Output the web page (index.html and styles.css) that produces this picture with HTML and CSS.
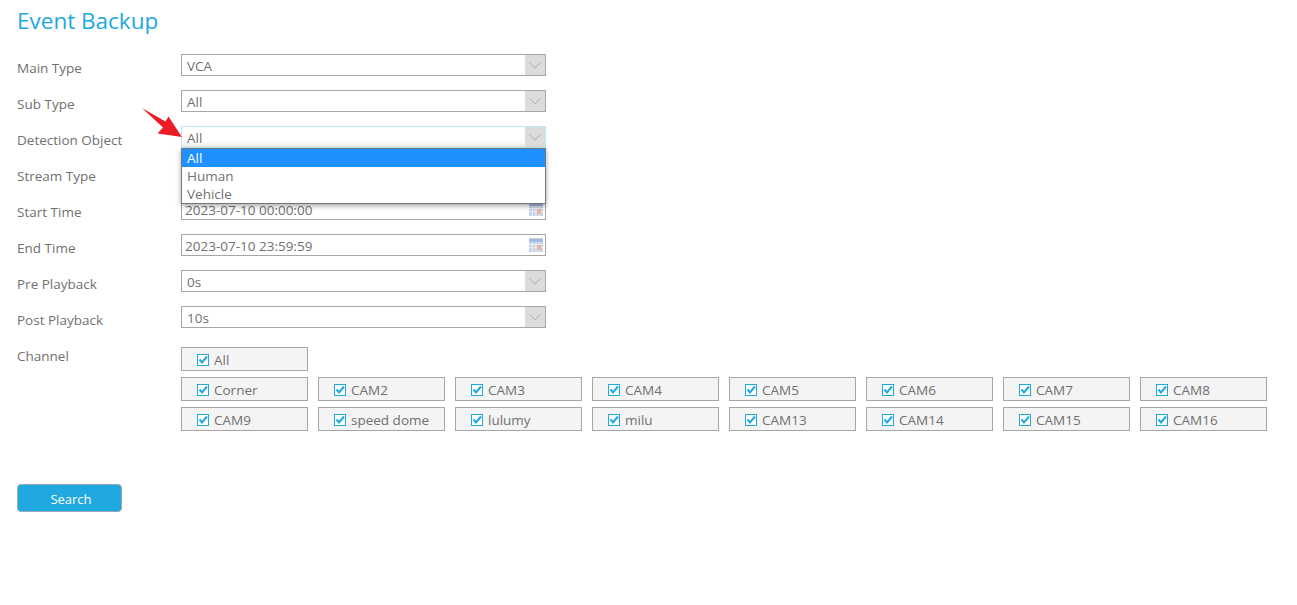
FILE: index.html
```html
<!DOCTYPE html>
<html lang="en">
<head>
<meta charset="utf-8">
<title>Event Backup</title>
<link rel="stylesheet" href="styles.css">
</head>
<body>
<main class="page">
  <h1 class="title">Event Backup</h1>
  <form class="form">
    <div class="row"><span class="label">Main Type</span><div class="select"><span class="value">VCA</span><span class="caret"><svg width="12" height="7" viewBox="0 0 12 7"><path d="M.5 .5L6 6L11.500 .5" fill="none" stroke="#b0b0b0"/></svg></span></div></div>
    <div class="row"><span class="label">Sub Type</span><div class="select"><span class="value">All</span><span class="caret"><svg width="12" height="7" viewBox="0 0 12 7"><path d="M.5 .5L6 6L11.500 .5" fill="none" stroke="#b0b0b0"/></svg></span></div></div>
    <div class="row"><span class="label">Detection Object</span>
      <div class="select select-open"><span class="value">All</span><span class="caret"><svg width="12" height="7" viewBox="0 0 12 7"><path d="M.5 .5L6 6L11.500 .5" fill="none" stroke="#b0b0b0"/></svg></span>
        <ul class="menu">
          <li class="option option-active">All</li>
          <li class="option">Human</li>
          <li class="option">Vehicle</li>
        </ul>
        <svg class="pointer" width="41" height="30" viewBox="0 0 41 30"><path d="M0 0L23.500 13.500L26.500 8.500L40 29L15.500 25.500L21 19.500Z" fill="#ee1c25"/></svg>
      </div>
    </div>
    <div class="row"><span class="label">Stream Type</span><div class="select"></div></div>
    <div class="row"><span class="label">Start Time</span><div class="select date"><span class="value">2023-07-10 00:00:00</span>
      <svg class="cal" width="14" height="14" viewBox="0 0 14 14"><rect width="14" height="14" fill="#c9d3e8"/><rect width="14" height="1" fill="#cfcfcf"/><rect y="1" width="14" height="3" fill="#a3bce6"/><path d="M0 6.500h14M0 9.500h14M3.500 4v10M7 4v10M10.500 4v10" stroke="#e6eaf4"/><rect x="8" y="7" width="4" height="5" fill="#eeb49c"/></svg></div></div>
    <div class="row"><span class="label">End Time</span><div class="select date"><span class="value">2023-07-10 23:59:59</span>
      <svg class="cal" width="14" height="14" viewBox="0 0 14 14"><rect width="14" height="14" fill="#c9d3e8"/><rect width="14" height="1" fill="#cfcfcf"/><rect y="1" width="14" height="3" fill="#a3bce6"/><path d="M0 6.500h14M0 9.500h14M3.500 4v10M7 4v10M10.500 4v10" stroke="#e6eaf4"/><rect x="8" y="7" width="4" height="5" fill="#eeb49c"/></svg></div></div>
    <div class="row"><span class="label">Pre Playback</span><div class="select"><span class="value">0s</span><span class="caret"><svg width="12" height="7" viewBox="0 0 12 7"><path d="M.5 .5L6 6L11.500 .5" fill="none" stroke="#b0b0b0"/></svg></span></div></div>
    <div class="row"><span class="label">Post Playback</span><div class="select"><span class="value">10s</span><span class="caret"><svg width="12" height="7" viewBox="0 0 12 7"><path d="M.5 .5L6 6L11.500 .5" fill="none" stroke="#b0b0b0"/></svg></span></div></div>
    <div class="row row-channel"><span class="label">Channel</span>
      <div class="channels">
        <label class="chan chan-all"><span class="check"><svg width="10" height="10" viewBox="0 0 10 10"><path d="M1.500 4.500L4 7.500L9 1.500" fill="none" stroke="#1fa7e0" stroke-width="2"/></svg></span>All</label>
        <label class="chan"><span class="check"><svg width="10" height="10" viewBox="0 0 10 10"><path d="M1.500 4.500L4 7.500L9 1.500" fill="none" stroke="#1fa7e0" stroke-width="2"/></svg></span>Corner</label>
        <label class="chan"><span class="check"><svg width="10" height="10" viewBox="0 0 10 10"><path d="M1.500 4.500L4 7.500L9 1.500" fill="none" stroke="#1fa7e0" stroke-width="2"/></svg></span>CAM2</label>
        <label class="chan"><span class="check"><svg width="10" height="10" viewBox="0 0 10 10"><path d="M1.500 4.500L4 7.500L9 1.500" fill="none" stroke="#1fa7e0" stroke-width="2"/></svg></span>CAM3</label>
        <label class="chan"><span class="check"><svg width="10" height="10" viewBox="0 0 10 10"><path d="M1.500 4.500L4 7.500L9 1.500" fill="none" stroke="#1fa7e0" stroke-width="2"/></svg></span>CAM4</label>
        <label class="chan"><span class="check"><svg width="10" height="10" viewBox="0 0 10 10"><path d="M1.500 4.500L4 7.500L9 1.500" fill="none" stroke="#1fa7e0" stroke-width="2"/></svg></span>CAM5</label>
        <label class="chan"><span class="check"><svg width="10" height="10" viewBox="0 0 10 10"><path d="M1.500 4.500L4 7.500L9 1.500" fill="none" stroke="#1fa7e0" stroke-width="2"/></svg></span>CAM6</label>
        <label class="chan"><span class="check"><svg width="10" height="10" viewBox="0 0 10 10"><path d="M1.500 4.500L4 7.500L9 1.500" fill="none" stroke="#1fa7e0" stroke-width="2"/></svg></span>CAM7</label>
        <label class="chan"><span class="check"><svg width="10" height="10" viewBox="0 0 10 10"><path d="M1.500 4.500L4 7.500L9 1.500" fill="none" stroke="#1fa7e0" stroke-width="2"/></svg></span>CAM8</label>
        <label class="chan"><span class="check"><svg width="10" height="10" viewBox="0 0 10 10"><path d="M1.500 4.500L4 7.500L9 1.500" fill="none" stroke="#1fa7e0" stroke-width="2"/></svg></span>CAM9</label>
        <label class="chan"><span class="check"><svg width="10" height="10" viewBox="0 0 10 10"><path d="M1.500 4.500L4 7.500L9 1.500" fill="none" stroke="#1fa7e0" stroke-width="2"/></svg></span>speed dome</label>
        <label class="chan"><span class="check"><svg width="10" height="10" viewBox="0 0 10 10"><path d="M1.500 4.500L4 7.500L9 1.500" fill="none" stroke="#1fa7e0" stroke-width="2"/></svg></span>lulumy</label>
        <label class="chan"><span class="check"><svg width="10" height="10" viewBox="0 0 10 10"><path d="M1.500 4.500L4 7.500L9 1.500" fill="none" stroke="#1fa7e0" stroke-width="2"/></svg></span>milu</label>
        <label class="chan"><span class="check"><svg width="10" height="10" viewBox="0 0 10 10"><path d="M1.500 4.500L4 7.500L9 1.500" fill="none" stroke="#1fa7e0" stroke-width="2"/></svg></span>CAM13</label>
        <label class="chan"><span class="check"><svg width="10" height="10" viewBox="0 0 10 10"><path d="M1.500 4.500L4 7.500L9 1.500" fill="none" stroke="#1fa7e0" stroke-width="2"/></svg></span>CAM14</label>
        <label class="chan"><span class="check"><svg width="10" height="10" viewBox="0 0 10 10"><path d="M1.500 4.500L4 7.500L9 1.500" fill="none" stroke="#1fa7e0" stroke-width="2"/></svg></span>CAM15</label>
        <label class="chan"><span class="check"><svg width="10" height="10" viewBox="0 0 10 10"><path d="M1.500 4.500L4 7.500L9 1.500" fill="none" stroke="#1fa7e0" stroke-width="2"/></svg></span>CAM16</label>
      </div>
    </div>
    <button type="button" class="search">Search</button>
  </form>
</main>
</body>
</html>
```
FILE: styles.css
```css
* { box-sizing: border-box; }
html, body { margin: 0; padding: 0; background: #fff; }
body {
  font-family: "Open Sans", "Noto Sans", sans-serif;
  font-size: 13.500px;
  color: #707070;
  overflow: hidden;
}
.page { padding: 5px 17px 0; height: 605px; }
.title {
  margin: 0 0 17px;
  font-size: 22.500px;
  font-weight: 400;
  line-height: 32px;
  color: #20a8e0;
}
.form { display: flex; flex-direction: column; gap: 14px; }
.row { display: flex; align-items: flex-start; height: 22px; }
.label { width: 164px; flex: none; line-height: 22px; padding-top: 3px; }
.select {
  position: relative;
  width: 365px;
  height: 22px;
  border: 1px solid #a6a6a6;
  display: flex;
  align-items: center;
  justify-content: space-between;
  background: #fff;
}
.value { padding-left: 5px; line-height: 20px; padding-top: 1px; }
.date .value { padding-left: 3px; }
.caret {
  width: 20px;
  height: 20px;
  background: #dcdcdc;
  display: flex;
  align-items: center;
  justify-content: center;
}
.cal { margin-right: 2px; }
.select-open {
  border-color: #bdeaf7;
  box-shadow: inset 0 -6px 6px -4px #e4e4e4;
}
.menu {
  position: absolute;
  left: -1px;
  top: 21px;
  width: 365px;
  height: 56px;
  margin: 0;
  padding: 0;
  list-style: none;
  background: #fff;
  border: 1px solid #767676;
  box-shadow: 0 2px 5px rgba(0, 0, 0, .35);
  z-index: 2;
}
.option { height: 18px; line-height: 18px; padding-left: 5px; }
.option-active { background: #1e90ff; color: #fff; }
.pointer { position: absolute; left: -40px; top: -19px; z-index: 3; }
.row-channel { height: auto; margin-top: 5px; }
.row-channel .label { padding-top: 0; margin-top: -2px; }
.channels {
  display: grid;
  grid-template-columns: repeat(8, 127px);
  column-gap: 10px;
  row-gap: 6px;
}
.chan-all { grid-column: 1 / -1; width: 127px; }
.chan {
  height: 24px;
  border: 1px solid #a6a6a6;
  background: #f4f4f4;
  display: flex;
  align-items: center;
  padding: 2px 0 0 15px;
  line-height: 20px;
}
.check {
  width: 12px;
  height: 12px;
  border: 1px solid #1fa7e0;
  background: #fff;
  margin-right: 5px;
  display: flex;
  align-items: center;
  justify-content: center;
  flex: none;
}
.check svg { flex: none; }
.search {
  width: 105px;
  height: 28px;
  margin-top: 39px;
  border: 1px solid #9aa9b2;
  border-radius: 4px;
  background: #20a8e0;
  color: #fff;
  font: inherit;
  font-size: 13px;
  padding: 2px 0 0 3px;
}
```
